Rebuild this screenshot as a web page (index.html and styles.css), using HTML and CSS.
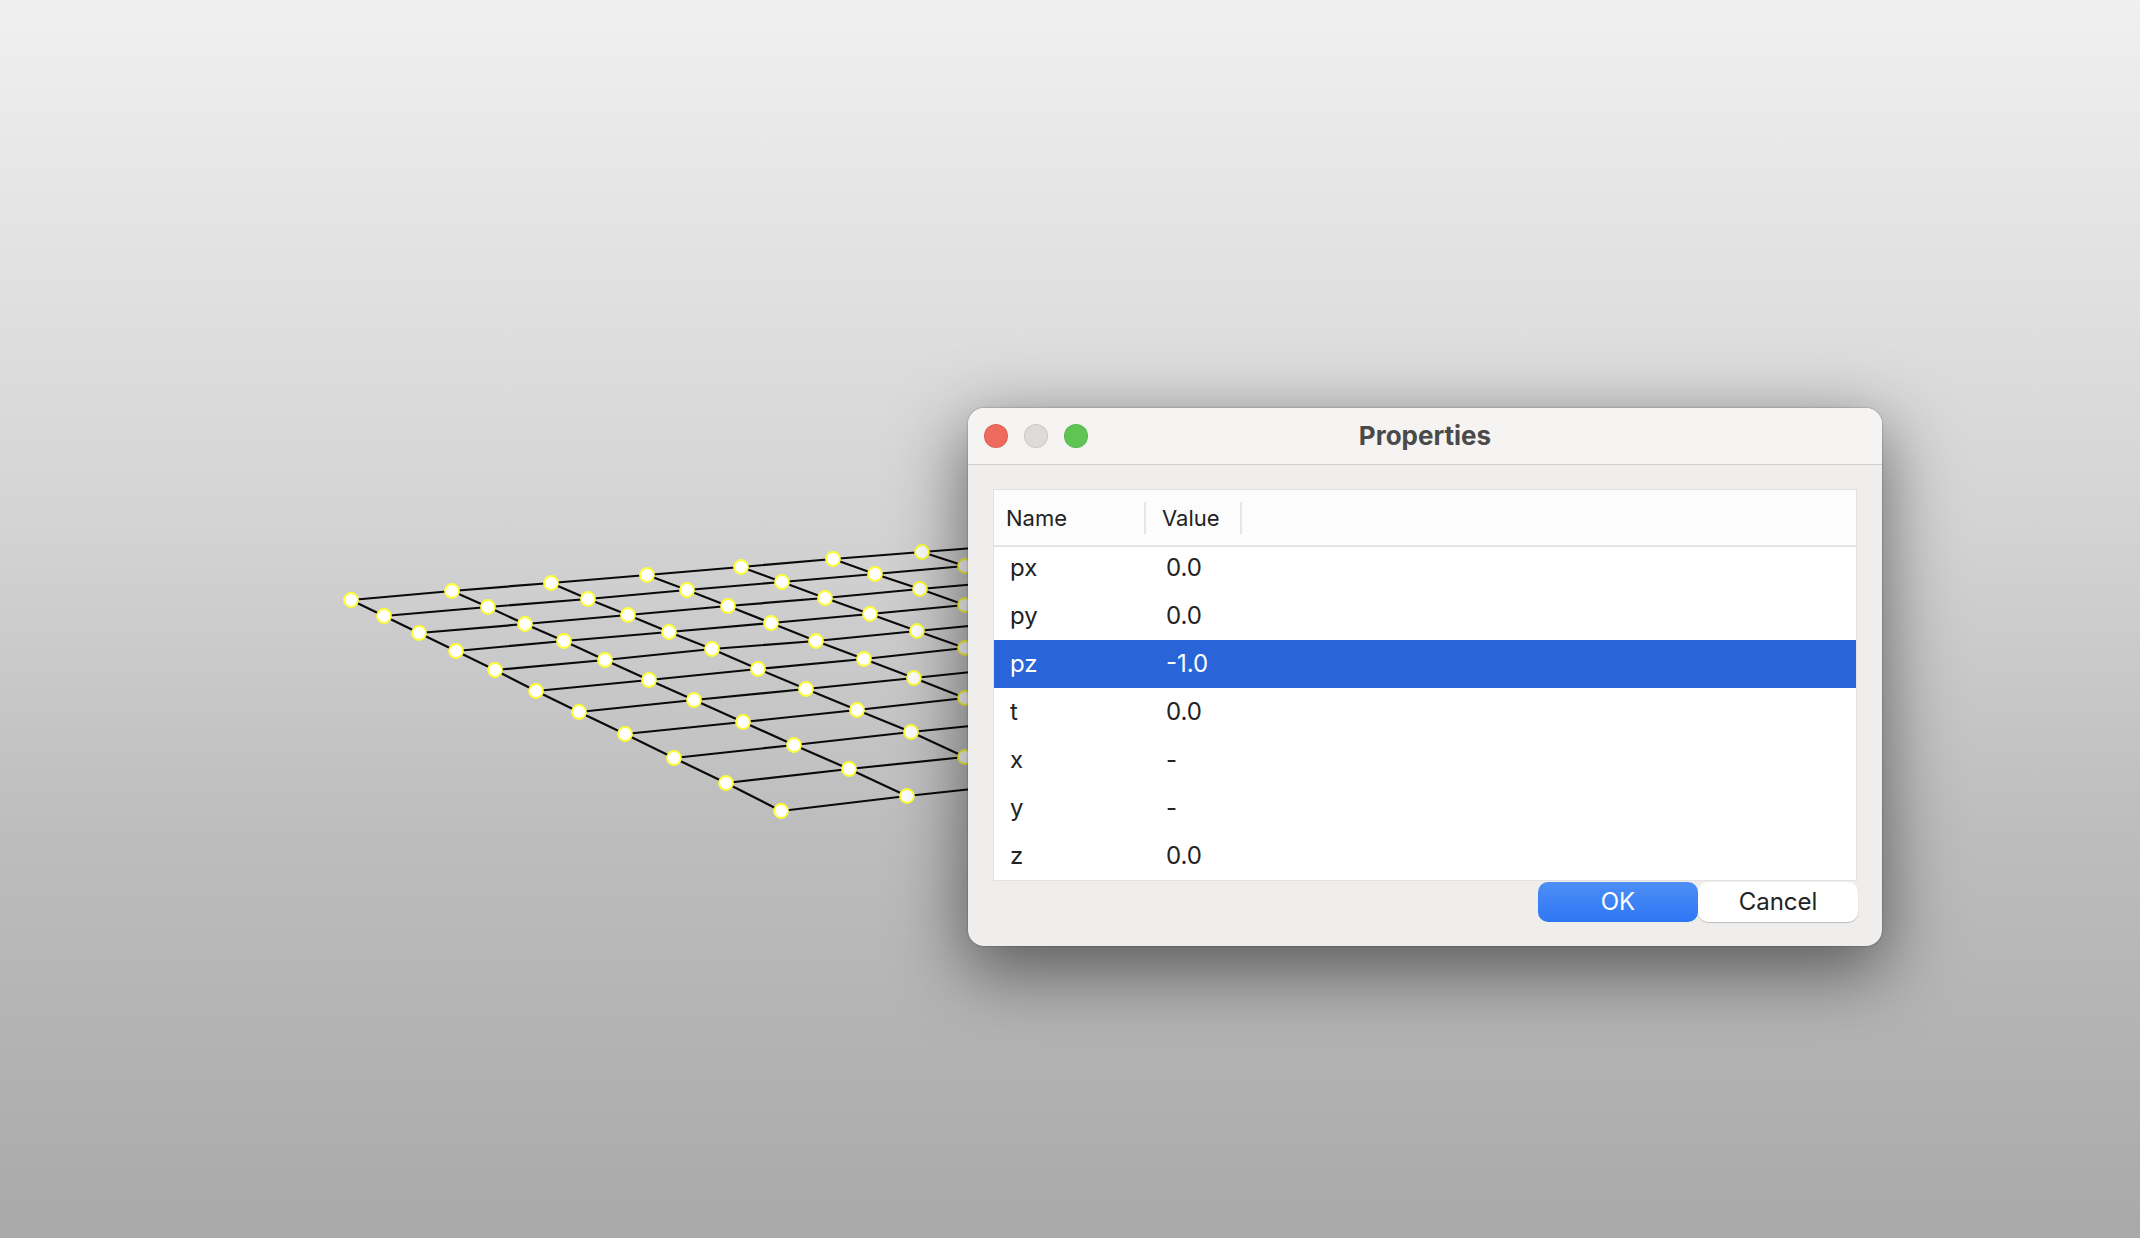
FILE: index.html
```html
<!DOCTYPE html>
<html lang="en">
<head>
    <meta charset="UTF-8">
    <meta name="viewport" content="width=device-width, initial-scale=1.0">
    <title>Properties</title>
    <link rel="stylesheet" href="styles.css">
</head>
<body>
    <!-- surface grid in the 3d view, rows then columns -->
    <svg class="viewport" width="2140" height="1238" viewBox="0 0 2140 1238">
        <g class="lines">
            <polyline points="351,600 452,591 551,583 647,575 741,567 833,559 922,552 1000,546"/>
            <polyline points="384,616 488,607 588,599 687,590 782,582 875,574 965,566"/>
            <polyline points="419,633 525,624 628,615 728,606 825,598 920,589 1000,582"/>
            <polyline points="456,651 564,641 669,632 771,623 870,614 965,605"/>
            <polyline points="495,670 605,660 712,649 816,641 917,631 1000,623"/>
            <polyline points="536,691 649,680 758,669 864,659 965,648"/>
            <polyline points="579,712 694,700 806,689 914,678 1000,669"/>
            <polyline points="625,734 743,722 857,710 965,698"/>
            <polyline points="674,758 794,745 911,732 1000,723"/>
            <polyline points="726,783 849,769 965,757"/>
            <polyline points="781,811 907,796 1000,786"/>
            <polyline points="351,600 384,616 419,633 456,651 495,670 536,691 579,712 625,734 674,758 726,783 781,811"/>
            <polyline points="452,591 488,607 525,624 564,641 605,660 649,680 694,700 743,722 794,745 849,769 907,796"/>
            <polyline points="551,583 588,599 628,615 669,632 712,649 758,669 806,689 857,710 911,732 965,757"/>
            <polyline points="647,575 687,590 728,606 771,623 816,641 864,659 914,678 965,698"/>
            <polyline points="741,567 782,582 825,598 870,614 917,631 965,648"/>
            <polyline points="833,559 875,574 920,589 965,605"/>
            <polyline points="922,552 965,566"/>
        </g>
        <g class="nodes">
            <circle cx="351" cy="600" r="7"/><circle cx="452" cy="591" r="7"/><circle cx="551" cy="583" r="7"/><circle cx="647" cy="575" r="7"/><circle cx="741" cy="567" r="7"/><circle cx="833" cy="559" r="7"/><circle cx="922" cy="552" r="7"/>
            <circle cx="384" cy="616" r="7"/><circle cx="488" cy="607" r="7"/><circle cx="588" cy="599" r="7"/><circle cx="687" cy="590" r="7"/><circle cx="782" cy="582" r="7"/><circle cx="875" cy="574" r="7"/><circle cx="965" cy="566" r="7"/>
            <circle cx="419" cy="633" r="7"/><circle cx="525" cy="624" r="7"/><circle cx="628" cy="615" r="7"/><circle cx="728" cy="606" r="7"/><circle cx="825" cy="598" r="7"/><circle cx="920" cy="589" r="7"/>
            <circle cx="456" cy="651" r="7"/><circle cx="564" cy="641" r="7"/><circle cx="669" cy="632" r="7"/><circle cx="771" cy="623" r="7"/><circle cx="870" cy="614" r="7"/><circle cx="965" cy="605" r="7"/>
            <circle cx="495" cy="670" r="7"/><circle cx="605" cy="660" r="7"/><circle cx="712" cy="649" r="7"/><circle cx="816" cy="641" r="7"/><circle cx="917" cy="631" r="7"/>
            <circle cx="536" cy="691" r="7"/><circle cx="649" cy="680" r="7"/><circle cx="758" cy="669" r="7"/><circle cx="864" cy="659" r="7"/><circle cx="965" cy="648" r="7"/>
            <circle cx="579" cy="712" r="7"/><circle cx="694" cy="700" r="7"/><circle cx="806" cy="689" r="7"/><circle cx="914" cy="678" r="7"/>
            <circle cx="625" cy="734" r="7"/><circle cx="743" cy="722" r="7"/><circle cx="857" cy="710" r="7"/><circle cx="965" cy="698" r="7"/>
            <circle cx="674" cy="758" r="7"/><circle cx="794" cy="745" r="7"/><circle cx="911" cy="732" r="7"/>
            <circle cx="726" cy="783" r="7"/><circle cx="849" cy="769" r="7"/><circle cx="965" cy="757" r="7"/>
            <circle cx="781" cy="811" r="7"/><circle cx="907" cy="796" r="7"/>
        </g>
    </svg>

    <div class="window">
        <div class="title-bar">
            <div class="lights">
                <span class="light red"></span>
                <span class="light grey"></span>
                <span class="light green"></span>
            </div>
            <div class="title">Properties</div>
        </div>
        <div class="content">
            <table class="props">
                <thead>
                    <tr>
                        <th class="col-name">Name</th>
                        <th class="col-value">Value</th>
                        <th></th>
                    </tr>
                </thead>
                <tbody>
                    <tr><td>px</td><td>0.0</td><td></td></tr>
                    <tr><td>py</td><td>0.0</td><td></td></tr>
                    <tr class="selected"><td>pz</td><td>-1.0</td><td></td></tr>
                    <tr><td>t</td><td>0.0</td><td></td></tr>
                    <tr><td>x</td><td>-</td><td></td></tr>
                    <tr><td>y</td><td>-</td><td></td></tr>
                    <tr><td>z</td><td>0.0</td><td></td></tr>
                </tbody>
            </table>
            <div class="buttons">
                <button class="btn btn-ok">OK</button>
                <button class="btn btn-cancel">Cancel</button>
            </div>
        </div>
    </div>
</body>
</html>
```
FILE: styles.css
```css
html, body {
    margin: 0;
    padding: 0;
}
body {
    width: 2140px;
    height: 1238px;
    overflow: hidden;
    position: relative;
    font-family: Inter, "Liberation Sans", sans-serif;
    background: linear-gradient(to bottom, #f0f0f0 0, #d3d3d3 530px, #bdbdbd 830px, #a9a9a9 1238px);
}
.viewport {
    position: absolute;
    top: 0;
    left: 0;
}
.lines polyline {
    fill: none;
    stroke: #0a0a0a;
    stroke-width: 2.2;
}
.nodes circle {
    fill: #fff;
    stroke: #ffff33;
    stroke-width: 1.8;
}
.window {
    position: absolute;
    top: 408px;
    left: 968px;
    width: 914px;
    height: 538px;
    background: #efeeed;
    border-radius: 16px;
    box-shadow: 0 22px 70px 4px rgba(0, 0, 0, 0.5), 0 0 2px rgba(0, 0, 0, 0.4);
    overflow: hidden;
}
.title-bar {
    height: 56px;
    display: flex;
    align-items: center;
    justify-content: center;
    position: relative;
    background: #f5f4f2;
    border-bottom: 1px solid #cfcecd;
}
.lights {
    position: absolute;
    top: 16px;
    left: 16px;
    display: flex;
    gap: 16px;
}
.light {
    width: 24px;
    height: 24px;
    border-radius: 50%;
    box-sizing: border-box;
    border: 1px solid rgba(0, 0, 0, 0.08);
}
.red { background: #ee6a5f; }
.grey { background: #dcdbd9; }
.green { background: #5fc454; }
.title {
    font-size: 26px;
    font-weight: 700;
    color: #4a4a4a;
    padding-bottom: 2px;
}
.content {
    padding: 25px 26px 0 26px;
}
.props {
    width: 100%;
    border-collapse: collapse;
    table-layout: fixed;
    background: #fff;
    box-shadow: 0 0 0 1px #e2e2e2;
    font-size: 24px;
    color: #222;
}
.props th {
    height: 56px;
    padding: 0;
    font-size: 22px;
    font-weight: 400;
    text-align: left;
    background: #fcfcfc;
    border-bottom: 2px solid #e5e5e5;
    box-sizing: border-box;
}
.props .col-name {
    width: 152px;
    padding-left: 12px;
    background: #fcfcfc linear-gradient(#e5e5e5, #e5e5e5) no-repeat right center / 2px 32px;
}
.props .col-value {
    width: 96px;
    padding-left: 16px;
    background: #fcfcfc linear-gradient(#e5e5e5, #e5e5e5) no-repeat right center / 2px 32px;
}
.props td {
    height: 48px;
    padding: 0 0 1px 16px;
    box-sizing: border-box;
}
.props td:nth-child(2) {
    padding-left: 20px;
}
.props tbody tr:first-child td {
    height: 46px;
    padding-bottom: 4px;
}
.props .selected {
    background: #2964d9;
    color: #fff;
}
.buttons {
    display: flex;
    justify-content: flex-end;
    margin-top: 2px;
    margin-right: -2px;
}
.btn {
    width: 160px;
    height: 40px;
    padding: 0 0 2px;
    border: none;
    border-radius: 10px;
    font-family: inherit;
    font-size: 24px;
}
.btn-ok {
    background: linear-gradient(to bottom, #4d8ff5, #2f76f5);
    color: #fff;
}
.btn-cancel {
    background: #fff;
    color: #222;
    box-shadow: 0 1px 1px rgba(0, 0, 0, 0.2);
}
```
